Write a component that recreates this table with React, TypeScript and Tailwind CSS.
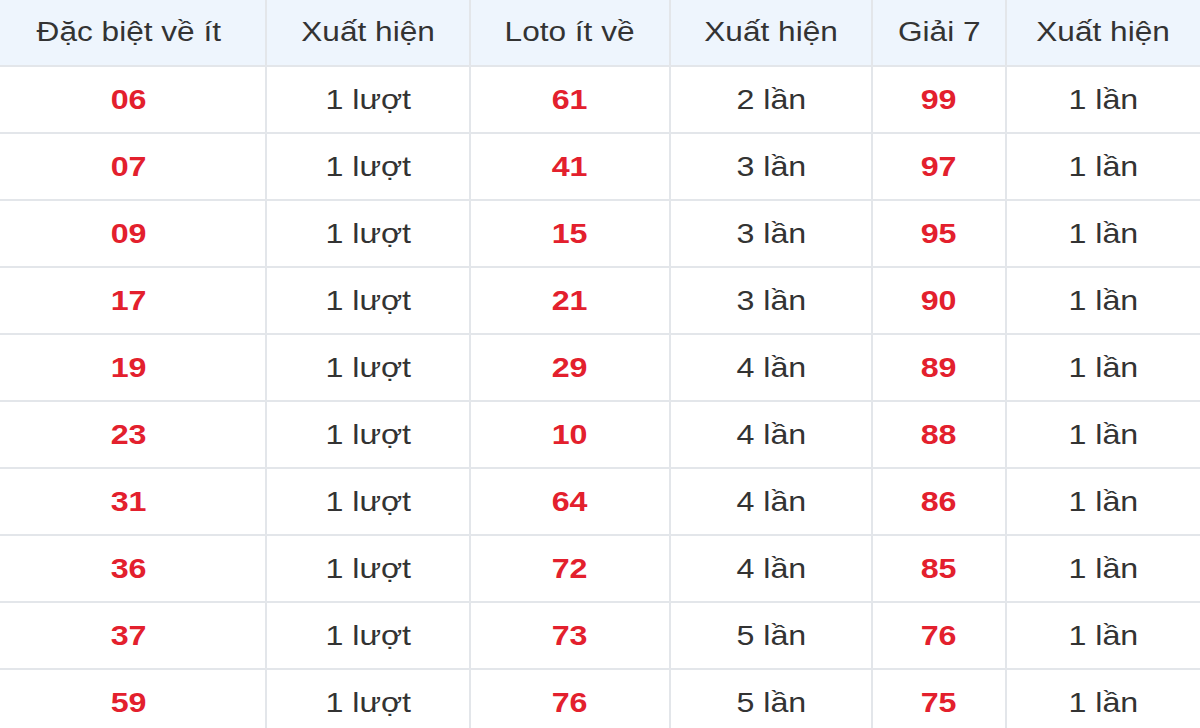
const ROWS = [
  ["06", "1 lượt", "61", "2 lần", "99", "1 lần"],
  ["07", "1 lượt", "41", "3 lần", "97", "1 lần"],
  ["09", "1 lượt", "15", "3 lần", "95", "1 lần"],
  ["17", "1 lượt", "21", "3 lần", "90", "1 lần"],
  ["19", "1 lượt", "29", "4 lần", "89", "1 lần"],
  ["23", "1 lượt", "10", "4 lần", "88", "1 lần"],
  ["31", "1 lượt", "64", "4 lần", "86", "1 lần"],
  ["36", "1 lượt", "72", "4 lần", "85", "1 lần"],
  ["37", "1 lượt", "73", "5 lần", "76", "1 lần"],
  ["59", "1 lượt", "76", "5 lần", "75", "1 lần"],
];

const HEADERS = ["Đặc biệt về ít", "Xuất hiện", "Loto ít về", "Xuất hiện", "Giải 7", "Xuất hiện"];
const WIDTHS = ["w-[266px]", "w-[204px]", "w-[200px]", "w-[202px]", "w-[134px]", "w-[194px]"];

export default function App() {
  return (
    <div className="w-[1200px] h-[728px] overflow-hidden bg-white font-['Liberation_Sans',Arial,sans-serif]">
      <table className="w-[1200px] table-fixed border-collapse">
        <thead>
          <tr className="h-[66px] bg-[#eef5fd]">
            {HEADERS.map((h, i) => (
              <th
                key={i}
                className={`${WIDTHS[i]} border-2 border-[#e3e6ea] border-t-0 first:border-l-0 first:pr-[8px] last:border-r-0 text-center font-normal text-[27px] text-[#333]`}
              >
                <span className="inline-block scale-x-[1.17]">{h}</span>
              </th>
            ))}
          </tr>
        </thead>
        <tbody>
          {ROWS.map((r, ri) => (
            <tr key={ri} className="h-[67px]">
              {r.map((c, ci) => (
                <td
                  key={ci}
                  className={`border-2 border-[#e3e6ea] first:border-l-0 first:pr-[8px] last:border-r-0 text-center text-[28px] ${
                    ci % 2 === 0 ? "font-bold text-[#e3202d]" : "text-[#333]"
                  }`}
                >
                  <span className="inline-block scale-x-[1.15]">{c}</span>
                </td>
              ))}
            </tr>
          ))}
        </tbody>
      </table>
    </div>
  );
}
